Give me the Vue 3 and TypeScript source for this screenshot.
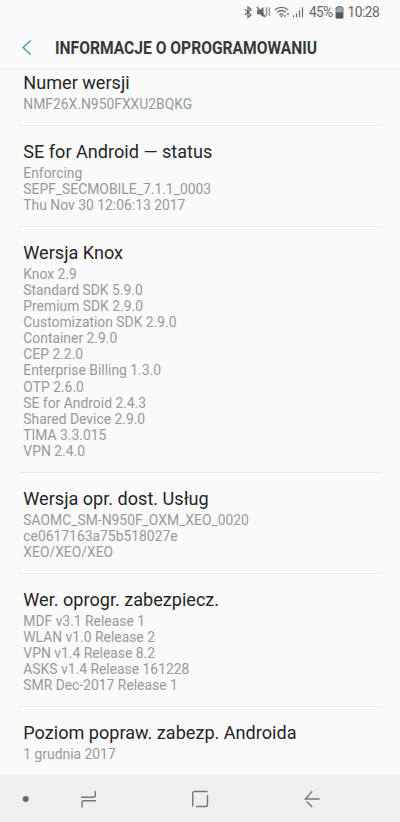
<script setup lang="ts">
interface Section {
  title: string
  lines: string[]
}

const sections: Section[] = [
  { title: 'Numer wersji', lines: ['NMF26X.N950FXXU2BQKG'] },
  {
    title: 'SE for Android — status',
    lines: ['Enforcing', 'SEPF_SECMOBILE_7.1.1_0003', 'Thu Nov 30 12:06:13 2017'],
  },
  {
    title: 'Wersja Knox',
    lines: [
      'Knox 2.9', 'Standard SDK 5.9.0', 'Premium SDK 2.9.0', 'Customization SDK 2.9.0',
      'Container 2.9.0', 'CEP 2.2.0', 'Enterprise Billing 1.3.0', 'OTP 2.6.0',
      'SE for Android 2.4.3', 'Shared Device 2.9.0', 'TIMA 3.3.015', 'VPN 2.4.0',
    ],
  },
  {
    title: 'Wersja opr. dost. Usług',
    lines: ['SAOMC_SM-N950F_OXM_XEO_0020', 'ce0617163a75b518027e', 'XEO/XEO/XEO'],
  },
  {
    title: 'Wer. oprogr. zabezpiecz.',
    lines: [
      'MDF v3.1 Release 1', 'WLAN v1.0 Release 2', 'VPN v1.4 Release 8.2',
      'ASKS v1.4 Release 161228', 'SMR Dec-2017 Release 1',
    ],
  },
  { title: 'Poziom popraw. zabezp. Androida', lines: ['1 grudnia 2017'] },
]
</script>

<template>
  <div class="screen">
    <div class="status">
      <svg class="status-icons" width="66" height="16" viewBox="0 0 66 16" fill="none" stroke="#6b6b6b">
        <path d="M1.8 5.1 8 10.9 5 13.3V2.900L8 5.500 1.8 11.1" stroke-width="1.3" />
        <path d="M14 6h2.7L20.500 3v10.300l-3.800-3H14z" fill="#6b6b6b" stroke="none" />
        <path d="m14 3 8.500 10" stroke-width="1.4" />
        <path d="m23 3.300 1 1.7-1 1.7 1 1.7-1 1.7 1 1.7M25.800 3.300l.8 1.7-.8 1.7.8 1.7-.8 1.7.8 1.7" stroke-width="1" />
        <path d="M32 5.900c3.800-3.400 9.200-3.400 13 0M34.200 8.400c2.600-2.300 6-2.300 8.600 0M36.300 10.700c1.300-1.100 2.900-1.100 4.200 0" stroke-width="1.3" />
        <path d="m36.900 11.600 1.500 1.800 1.400-1.800zM40.500 11.300l1.500 2 1.400-2zM43.500 10.700l1.500-2.100 1.500 2.100z" fill="#6b6b6b" stroke="none" />
        <path d="M50.500 11.300v2M53.500 9.300v4M56.500 6.300v7M59.500 3.300v10" stroke-width="1.2" />
      </svg>
      <span class="percent">45%</span>
      <svg class="battery" width="9" height="13" viewBox="0 0 9 13">
        <path d="M2.7 0h3.6v1.3H8v10.9H1V1.3h1.7z" fill="#a4a4a4" />
        <path d="M1 6.4h7v5.8H1z" fill="#555" />
        <path d="M1 12V1.6h1.8V.5h3.4v1.1H8V12z" fill="none" stroke="#666" stroke-width=".9" />
      </svg>
      <span class="clock">10:28</span>
    </div>
    <header class="header">
      <svg class="back" width="12" height="17" viewBox="0 0 12 17" fill="none" stroke="#4f9fb3" stroke-width="1.5">
        <path d="M9.8 1.5 2 8.5l7.8 7" />
      </svg>
      <h1>INFORMACJE O OPROGRAMOWANIU</h1>
    </header>
    <main class="list">
      <div class="content">
        <section v-for="s in sections" :key="s.title" class="item">
          <h2>{{ s.title }}</h2>
          <p v-for="line in s.lines" :key="line">{{ line }}</p>
        </section>
      </div>
    </main>
    <nav class="nav">
      <svg width="400" height="47" viewBox="0 0 400 47" fill="none" stroke="#777" stroke-width="1.4">
        <circle cx="25.7" cy="24" r="3" fill="#686868" stroke="none" />
        <path d="M81 22.200h12.300q2 0 2-2v-4.300M96 25.700H84q-2 0-2 2v4.800" />
        <path d="M207.500 16.500h-12.800q-2 0-2 2v13M196 31.500h9.500q2 0 2-2V20" />
        <path d="M319.500 24h-14l6.700-7.700M306.700 26.500l5.500 5.500" />
      </svg>
    </nav>
  </div>
</template>

<style>
body { margin: 0; background: #fafafa; }
</style>

<style scoped>
.screen {
  width: 400px;
  height: 822px;
  display: flex;
  flex-direction: column;
  overflow: hidden;
  background: #fafafa;
  font-family: Roboto, "Liberation Sans", sans-serif;
}
.status {
  flex: none;
  height: 25px;
  display: flex;
  align-items: center;
  padding-left: 243px;
  color: #666;
  font-size: 13.8px;
  line-height: 25px;
  white-space: nowrap;
}
.status-icons { flex: none; margin-top: -1px; }
.percent { width: 26px; letter-spacing: -.7px; }
.battery { flex: none; }
.clock { margin-left: 3.500px; letter-spacing: -.55px; }
.header {
  flex: none;
  box-sizing: border-box;
  height: 45px;
  display: flex;
  align-items: center;
  padding-left: 21px;
  border-bottom: 1px solid #ececec;
}
.back { flex: none; }
h1 {
  margin: 2px 0 0 21.500px;
  color: #393939;
  font-size: 17.8px;
  font-weight: 700;
  line-height: 24px;
  white-space: nowrap;
  transform: scaleX(.878);
  transform-origin: left;
}
.list { flex: 1; min-height: 0; overflow: hidden; }
.content { margin-top: -12.700px; padding: 0 17px 0 18px; }
.item {
  padding: 14.800px 0 12.900px 5.300px;
  border-bottom: 1px solid #ebebeb;
}
.item:last-child { border-bottom: 0; }
h2 {
  margin: 0 0 2.500px;
  color: #252525;
  font-size: 18.100px;
  font-weight: 400;
  line-height: 21.500px;
  white-space: nowrap;
}
p {
  margin: 0;
  color: #999;
  font-size: 13.880px;
  line-height: 16.1px;
  white-space: nowrap;
}
.nav { flex: none; height: 47px; background: #efefef; }
.nav svg { display: block; }
</style>
